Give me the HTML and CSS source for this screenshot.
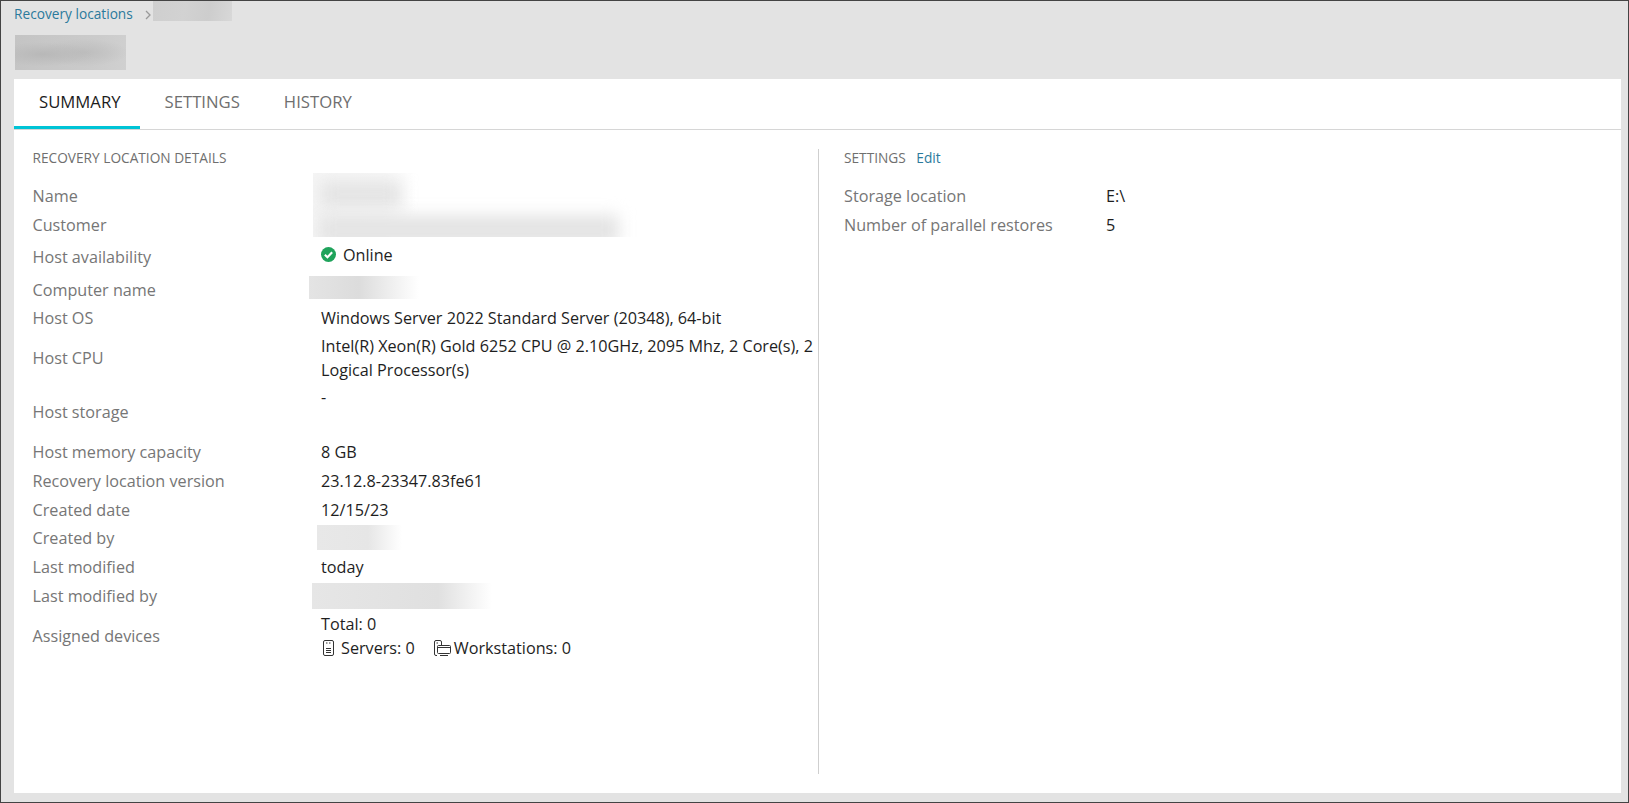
FILE: index.html
```html
<!DOCTYPE html>
<html lang="en">
<head>
<meta charset="utf-8">
<title>Recovery location</title>
<link rel="stylesheet" href="styles.css">
</head>
<body>
<div class="app">
  <nav class="crumbs">
    <a class="crumb-link">Recovery locations</a>
    <svg class="crumb-sep" width="8" height="10" viewBox="0 0 8 10"><path d="M2 1l4 4-4 4" fill="none" stroke="#9a9a9a" stroke-width="1.3"/></svg>
    <span class="redact redact-crumb"></span>
  </nav>
  <div class="redact redact-title"></div>
  <main class="card">
    <div class="tabs">
      <span class="tab tab-active">SUMMARY</span>
      <span class="tab">SETTINGS</span>
      <span class="tab">HISTORY</span>
    </div>
    <div class="columns">
      <section class="col-left">
        <h2 class="sec-title">RECOVERY LOCATION DETAILS</h2>
        <dl class="details">
          <dt>Name</dt><dd class="holder"><span class="redact redact-name"><i class="bar bar-a"></i><i class="bar bar-b"></i></span></dd>
          <dt>Customer</dt><dd></dd>
          <dt>Host availability</dt><dd class="up2 status"><svg class="ok" width="15" height="15" viewBox="0 0 14 14"><circle cx="7" cy="7" r="7" fill="#1fa35b"/><path d="M3.600 7.300l2.400 2.300 4.400-4.600" fill="none" stroke="#fff" stroke-width="2"/></svg>Online</dd>
          <dt>Computer name</dt><dd class="holder"><span class="redact redact-computer"></span></dd>
          <dt>Host OS</dt><dd>Windows Server 2022 Standard Server (20348), 64-bit</dd>
          <dt>Host CPU</dt><dd>Intel(R) Xeon(R) Gold 6252 CPU @ 2.10GHz, 2095 Mhz, 2 Core(s), 2 Logical Processor(s)</dd>
          <dt>Host storage</dt><dd class="top">-</dd>
          <dt>Host memory capacity</dt><dd>8 GB</dd>
          <dt>Recovery location version</dt><dd>23.12.8-23347.83fe61</dd>
          <dt>Created date</dt><dd>12/15/23</dd>
          <dt>Created by</dt><dd class="holder"><span class="redact redact-creator"></span></dd>
          <dt>Last modified</dt><dd>today</dd>
          <dt>Last modified by</dt><dd class="holder"><span class="redact redact-modifier"></span></dd>
          <dt>Assigned devices</dt>
          <dd>
            <div>Total: 0</div>
            <div class="devices">
              <span class="device device-server"><svg width="11" height="16" viewBox="0 0 11 16" fill="none" stroke="#333" stroke-width="1"><rect x="0.500" y="0.500" width="10" height="15" rx="1.500"/><path d="M3 3h1.500M6 3h1.500M3 8.500h5M3 10.500h5M3 12.500h5"/></svg>Servers: 0</span>
              <span class="device device-work"><svg width="17" height="17" viewBox="0 0 17 17" fill="none" stroke="#333" stroke-width="1"><path d="M3 15.500H2A1.500 1.500 0 0 1 .5 14V2A1.500 1.500 0 0 1 2 .5h4A1.500 1.500 0 0 1 7.500 2v3"/><path d="M2.500 3h1.500"/><rect x="3.500" y="5.500" width="13" height="8" rx="1"/><path d="M3.500 7.500h13M6 15.500h8"/></svg>Workstations: 0</span>
            </div>
          </dd>
        </dl>
      </section>
      <section class="col-right">
        <h2 class="sec-title">SETTINGS <a class="edit">Edit</a></h2>
        <dl class="details details-right">
          <dt>Storage location</dt><dd>E:\</dd>
          <dt>Number of parallel restores</dt><dd>5</dd>
        </dl>
      </section>
    </div>
  </main>
</div>
</body>
</html>
```
FILE: styles.css
```css
* { box-sizing: border-box; }
html, body { margin: 0; padding: 0; }
body { width: 1629px; height: 803px; overflow: hidden; font-family: "Open Sans", "Liberation Sans", sans-serif; }
.app { width: 1629px; height: 803px; background: #e3e3e3; border: 1px solid #444; padding: 0 7px 0 13px; display: flex; flex-direction: column; }
.crumbs { height: 20px; display: flex; align-items: flex-start; font-size: 13.7px; line-height: 20px; flex: none; }
.crumb-link { color: #2b7a9c; padding-top: 3px; }
.crumb-sep { margin: 9px 1px 0 11px; flex: none; }
.redact { display: block; position: relative; }
.redact-crumb { width: 79px; height: 20px; background: linear-gradient(100deg, #cfcfcf, #d2d2d2 40%, #cdcdcd 70%, #d8d8d8); }
.redact-title { width: 111px; height: 35px; margin: 14px 0 9px 1px; flex: none; background: radial-gradient(ellipse 45% 35% at 25% 55%, #b8b8b8, rgba(184,184,184,0) 100%), radial-gradient(ellipse 40% 40% at 62% 50%, #bdbdbd, rgba(189,189,189,0) 100%), linear-gradient(100deg, #c4c4c4, #cbcbcb 70%, #d0d0d0); }
.card { flex: 1; background: #fff; margin-bottom: 9px; display: flex; flex-direction: column; }
.tabs { height: 51px; display: flex; border-bottom: 1px solid #d6d6d6; flex: none; }
.tab { height: 50px; padding: 0 19px 6px 25px; display: flex; align-items: center; font-size: 16.7px; font-weight: 500; color: #6f6f6f; }
.tab-active { color: #1c1c1c; padding-bottom: 3px; border-bottom: 3px solid #00c4d6; }
.columns { flex: 1; display: flex; padding: 19px 0 19px 0; }
.col-left { width: 805px; padding-left: 18.5px; border-right: 1px solid #cfcfcf; flex: none; }
.col-right { flex: 1; padding-left: 25px; }
.sec-title { margin: 0; height: 18px; line-height: 18px; font-size: 13.7px; font-weight: 400; color: #6f6f6f; }
.edit { color: #2b7a9c; font-size: 13.7px; margin-left: 7px; }
.details { margin: 14px 0 0; display: grid; grid-template-columns: 288.5px 1fr; grid-template-rows: 29px 29px 35px 32px 24px 55px 53px 28px 30px 28px 28px 30px 28px 52px; font-size: 16.2px; line-height: 24px; color: #1e1e1e; }
.details-right { grid-template-columns: 262px 1fr; grid-template-rows: 29px 29px; }
dt { color: #767676; align-self: center; }
dd { margin: 0; align-self: center; }
.holder { position: relative; align-self: stretch; }
.top { align-self: start; }
.up2 { margin-top: -4px; }
.status { display: flex; align-items: center; gap: 7px; }
.ok { flex: none; }
.devices { display: flex; gap: 19px; }
.device { display: flex; align-items: center; }
.device-server { gap: 7px; padding-left: 2px; }
.device-work { gap: 3px; }
.redact-name { position: absolute; left: -8px; top: -8px; width: 325px; height: 64px; overflow: hidden; background: linear-gradient(90deg, #f5f5f5 0, #f7f7f7 70px, #fff 104px); }
.bar { position: absolute; display: block; background: #e4e4e4; filter: blur(8px); }
.bar-a { left: 8px; top: 8px; width: 80px; height: 26px; }
.bar-b { left: 6px; top: 42px; width: 300px; height: 30px; }
.redact-computer { position: absolute; left: -12px; top: 2px; width: 110px; height: 23px; background: linear-gradient(90deg, #e4e4e4 0, #dcdcdc 45%, #fff 100%); }
.redact-creator { position: absolute; left: -4px; top: 1px; width: 85px; height: 25px; background: linear-gradient(90deg, #e8e8e8 0, #e6e6e6 60%, #fff 100%); }
.redact-modifier { position: absolute; left: -9px; top: 1px; width: 180px; height: 26px; background: linear-gradient(90deg, #e6e6e6 0, #e0e0e0 70%, #fff 100%); }
```
